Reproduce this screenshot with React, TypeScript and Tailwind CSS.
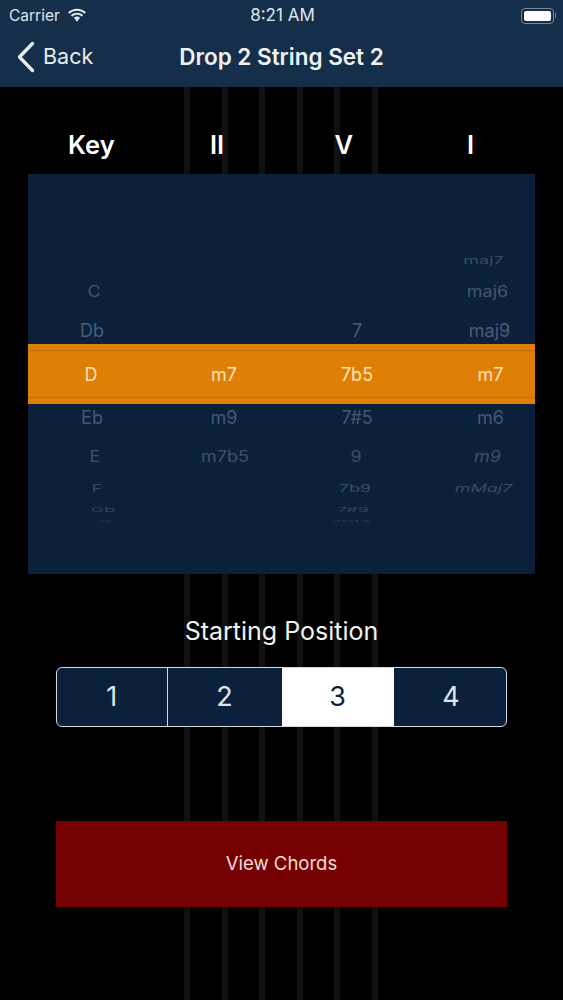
import React from "react";

const STRINGS = [187, 225, 262, 300, 337, 375];

type Cell = { t: string; c: string };
type Row = { h: string; s: string; o: string; cells: (Cell | null)[] };

const ROWS_TOP: Row[] = [
  { h: "h-[32px]", s: "scale-y-[0.6] text-[16px]", o: "text-[#3a4d66]", cells: [null, null, null, { t: "maj7", c: "translate-x-[6px]" }] },
  { h: "h-[39px]", s: "scale-y-[0.85]", o: "text-[#44566e]", cells: [{ t: "C", c: "translate-x-[3px]" }, null, null, { t: "maj6", c: "translate-x-[10px]" }] },
  { h: "h-[13px]", s: "", o: "text-[#4b5c73]", cells: [{ t: "Db", c: "translate-x-[1px]" }, null, { t: "7", c: "" }, { t: "maj9", c: "translate-x-[12px]" }] },
];

const ROWS_BOTTOM: Row[] = [
  { h: "h-[39px]", s: "", o: "text-[#46586f]", cells: [{ t: "Eb", c: "translate-x-[1px]" }, { t: "m9", c: "" }, { t: "7#5", c: "" }, { t: "m6", c: "translate-x-[13px]" }] },
  { h: "h-[31px]", s: "scale-y-[0.85]", o: "text-[#3f5169]", cells: [{ t: "E", c: "translate-x-[4px]" }, { t: "m7b5", c: "translate-x-[1px]" }, { t: "9", c: "-translate-x-[1px]" }, { t: "m9", c: "translate-x-[10px] italic" }] },
  { h: "h-[22px]", s: "scale-y-[0.6] text-[16px]", o: "text-[#3a4c64]", cells: [{ t: "F", c: "translate-x-[6px]" }, null, { t: "7b9", c: "-translate-x-[2px]" }, { t: "mMaj7", c: "translate-x-[6px] italic" }] },
  { h: "h-[11px]", s: "scale-y-[0.35] text-[15px]", o: "text-[#34465e]", cells: [{ t: "Gb", c: "translate-x-[12px]" }, null, { t: "7#9", c: "-translate-x-[4px]" }, null] },
  { h: "h-[8px]", s: "scale-y-[0.15] text-[14px]", o: "text-[#2a3c55]", cells: [{ t: "G", c: "translate-x-[14px]" }, null, { t: "7b13", c: "-translate-x-[6px]" }, null] },
];

const GRID = "grid grid-cols-[126px_140px_126px_115px]";

function PickerRow({ row }: { row: Row }) {
  return (
    <div className={`${GRID} ${row.h}`}>
      {row.cells.map((cell, i) => (
        <div key={i} className="h-0 flex items-center justify-center">
          {cell && (
            <span className={`text-[18px] leading-none ${row.o} ${row.s} ${cell.c}`}>{cell.t}</span>
          )}
        </div>
      ))}
    </div>
  );
}

function Wifi() {
  return (
    <svg width="20" height="15" viewBox="0 0 19 14" fill="#e4e9ee">
      <path d="M9.5 2.6c2.7 0 5.2 1 7.1 2.8l1.4-1.5C15.700 1.800 12.700.6 9.500.6S3.300 1.800 1 3.900l1.400 1.500C4.300 3.600 6.800 2.600 9.500 2.600z" />
      <path d="M9.500 6.300c1.700 0 3.300.6 4.500 1.800l1.400-1.500C13.800 5.100 11.700 4.300 9.500 4.300S5.200 5.100 3.600 6.600l1.400 1.500c1.200-1.200 2.800-1.800 4.500-1.800z" />
      <path d="M9.500 8c-1.100 0-2.100.4-2.900 1.100l2.900 3.900 2.900-3.900C11.600 8.400 10.600 8 9.500 8z" />
    </svg>
  );
}

export default function App() {
  return (
    <div className="relative h-[1000px] w-[563px] overflow-hidden bg-black font-['Inter','Noto_Sans',sans-serif] text-white">
      {STRINGS.map((x) => (
        <div key={x} className="absolute top-0 bottom-0 w-[6px] bg-[#111111]" style={{ left: x - 3 }} />
      ))}

      <div className="relative flex flex-col">
        {/* Nav bar */}
        <header className="h-[87px] bg-[#152f4a]">
          <div className="h-[31px] grid grid-cols-3 items-center pl-[9px] pr-[7px] text-[#e0e5ea]">
            <div className="flex items-center gap-[7px] text-[15.500px]">
              <span>Carrier</span>
              <Wifi />
            </div>
            <div className="text-center text-[17px]">8:21 AM</div>
            <div className="flex justify-end">
              <div className="flex items-center gap-[1px]">
                <div className="w-[33px] h-[16px] rounded-[4px] border border-[#75869a] p-[2px]">
                  <div className="h-full rounded-[2px] bg-white" />
                </div>
                <div className="w-[1px] h-[5px] bg-[#75869a]" />
              </div>
            </div>
          </div>
          <div className="relative h-[52px] flex items-center justify-center">
            <div className="absolute left-[17px] inset-y-0 flex items-center gap-[8px] text-[#e6ebf0]">
              <svg width="18" height="32" viewBox="0 0 18 32" fill="none" stroke="currentColor" strokeWidth="3.4" strokeLinecap="round" strokeLinejoin="round">
                <path d="M15.500 2.500 2.500 16l13 13.500" />
              </svg>
              <span className="text-[21.500px] leading-none">Back</span>
            </div>
            <h1 className="text-[22.500px] font-semibold text-[#eef1f4]">Drop 2 String Set 2</h1>
          </div>
        </header>

        {/* Picker */}
        <section className="mx-[28px] mt-[40px]">
          <div className="grid grid-cols-4 h-[47px] text-[25.500px] font-semibold leading-none text-center">
            <div className="pt-[5px]">Key</div>
            <div className="pt-[5px] -translate-x-[1px]">II</div>
            <div className="pt-[5px] -translate-x-[1px]">V</div>
            <div className="pt-[5px] -translate-x-[1px]">I</div>
          </div>
          <div className="h-[400px] bg-[#0b213b] pt-[86px]">
            {ROWS_TOP.map((r, i) => (
              <PickerRow key={i} row={r} />
            ))}
            <div className="h-[60px] py-[6px] bg-[#e07f06]">
              <div className={`${GRID} h-full items-center border-y border-[#c26c10] text-[18px] text-[#ffe2b4]`}>
                <div className="text-center">D</div>
                <div className="text-center">m7</div>
                <div className="text-center">7b5</div>
                <div className="text-center translate-x-[13px]">m7</div>
              </div>
            </div>
            <div className="h-[14px]" />
            {ROWS_BOTTOM.map((r, i) => (
              <PickerRow key={i} row={r} />
            ))}
          </div>
        </section>

        {/* Starting position */}
        <p className="mt-[41px] text-center text-[25px] leading-[33px] text-[#f2f2f2]">Starting Position</p>
        <div className="mx-[56px] mt-[19px] h-[60px] grid grid-cols-4 rounded-[6px] border-[1.5px] border-[#d5dae0] overflow-hidden text-[27px] bg-[#0b213b] text-[#dfe4ea]">
          <div className="flex items-center justify-center border-r-[1.5px] border-[#d5dae0] -translate-x-[1px]">1</div>
          <div className="flex items-center justify-center -translate-x-[1px]">2</div>
          <div className="flex items-center justify-center bg-white text-[#0b213b]">3</div>
          <div className="flex items-center justify-center translate-x-[1px]">4</div>
        </div>

        {/* Action */}
        <button className="mx-[56px] mt-[94px] h-[86px] bg-[#750002] text-[18.500px] text-[#f7dcd8]">View Chords</button>
      </div>
    </div>
  );
}
